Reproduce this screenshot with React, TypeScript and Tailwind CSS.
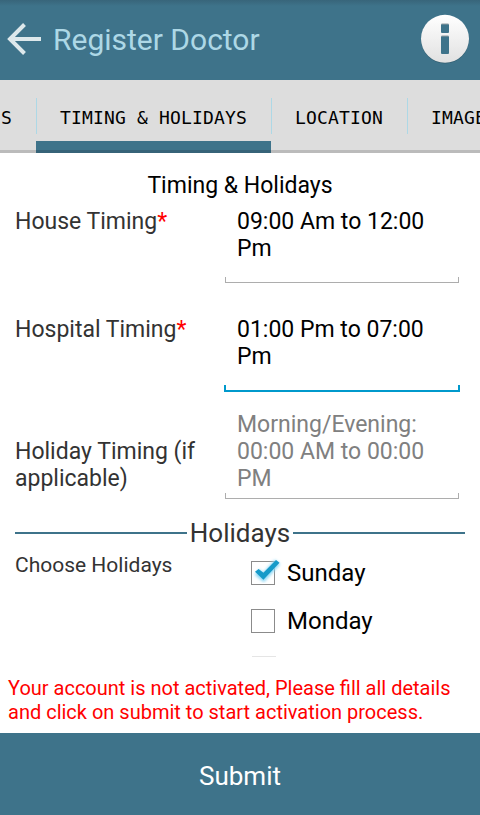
import React from "react";

function Divider() {
  return <div className="mt-[18px] h-9 w-px shrink-0 bg-[#add8e6]" />;
}

function Tab({ label, active = false, className }: { label: string; active?: boolean; className: string }) {
  return (
    <div className={`flex h-[73px] shrink-0 flex-col justify-between ${className}`}>
      <span className="block pt-[26px] text-[18px] leading-[24px] tracking-[0.17px] whitespace-pre">{label}</span>
      {active && <div className="-ml-6 h-3 w-[235px] shrink-0 border-b-[3px] border-[#366378] bg-[#3e738a]" />}
    </div>
  );
}

function Underline({ focused = false }: { focused?: boolean }) {
  return focused ? (
    <div className="-ml-px h-[7px] w-[236px] border-2 border-t-0 border-[#0099cc]" />
  ) : (
    <div className="h-1.5 w-[234px] border border-t-0 border-[#adadad]" />
  );
}

function CheckRow({ label, checked = false }: { label: string; checked?: boolean }) {
  return (
    <div className="flex h-12 items-center">
      <svg width="32" height="32" viewBox="0 0 32 32" className="shrink-0 overflow-visible">
        <defs>
          <filter id="glow" x="-30%" y="-30%" width="160%" height="160%">
            <feGaussianBlur stdDeviation="1.7" />
          </filter>
        </defs>
        <rect x="2.5" y="4.5" width="23" height="23" fill="white" stroke="#8b8b8b" />
        {checked && (
          <>
            <path d="M8 15L14.5 20.5L28.5 5" fill="none" stroke="#8bd7f5" strokeWidth="7" filter="url(#glow)" />
            <path d="M6 14.8L9.6 12L14.4 15.8L27 3L30.5 5.8L14.4 22.7Z" fill="#159ac9" />
          </>
        )}
      </svg>
      <span className="ml-[6px] text-[24px] leading-[28px]">{label}</span>
    </div>
  );
}

export default function App() {
  return (
    <div className="flex h-[815px] w-[480px] flex-col overflow-hidden bg-white font-[Roboto,sans-serif] text-black">
      <header className="flex h-20 shrink-0 items-start bg-[#3e738a] bg-[linear-gradient(#38657a_0,#3e738a_6px)]">
        <svg width="44" height="80" viewBox="0 0 44 80" className="shrink-0" fill="none" stroke="#dde8eb" strokeWidth="4">
          <path d="M9 39H41M24.5 24.5L10 39L24.5 53.5" />
        </svg>
        <h1 className="ml-[9px] pt-[22px] text-[30px] leading-[36px] whitespace-nowrap text-[#add8e6]">Register Doctor</h1>
        <svg width="50" height="50" viewBox="0 0 50 50" className="mt-[14px] mr-[10px] ml-auto shrink-0">
          <defs>
            <linearGradient id="info" x1="0" y1="0" x2="0" y2="1">
              <stop offset="0" stopColor="#ffffff" />
              <stop offset="1" stopColor="#e1e1e1" />
            </linearGradient>
          </defs>
          <circle cx="25" cy="25.5" r="24" fill="#315d70" />
          <circle cx="25" cy="24.8" r="24" fill="url(#info)" />
          <rect x="21" y="10" width="8" height="9" rx="1" fill="#3e738a" />
          <rect x="21" y="22" width="8" height="18" rx="1" fill="#3e738a" />
          <path d="M21.5 10H28.5M21.5 22H28.5" stroke="#929da1" />
        </svg>
      </header>

      <nav className="flex h-[73px] shrink-0 overflow-hidden bg-[linear-gradient(#dddddd_70px,#bbbbbb_70px)] font-['DejaVu_Sans_Mono',monospace]">
        <Tab label="S" className="w-9 pl-[1px]" />
        <Divider />
        <Tab label="TIMING & HOLIDAYS" active className="-ml-px w-[235px] pl-6" />
        <Divider />
        <Tab label="LOCATION" className="w-[135px] pl-[23px]" />
        <Divider />
        <Tab label="IMAGES" className="w-[120px] pl-[23px]" />
      </nav>

      <main className="h-[504px] shrink-0 overflow-hidden px-[15px] pt-[19px] text-[23px] leading-[27px]">
        <h2 className="h-9 text-center">Timing &amp; Holidays</h2>
        <div className="flex h-[108px]">
          <div className="w-[210px] text-[#333333]">House Timing<span className="text-[#ff0000]">*</span></div>
          <div className="w-[234px]">
            <div className="h-[69px] pl-3">09:00 Am to 12:00<br />Pm</div>
            <Underline />
          </div>
        </div>
        <div className="flex h-[95px]">
          <div className="w-[210px] text-[#333333]">Hospital Timing<span className="text-[#ff0000]">*</span></div>
          <div className="w-[234px]">
            <div className="h-[69px] pl-3">01:00 Pm to 07:00<br />Pm</div>
            <Underline focused />
          </div>
        </div>
        <div className="flex h-[105px]">
          <div className="w-[210px] pt-[27px] text-[#333333]">Holiday Timing (if<br />applicable)</div>
          <div className="w-[234px]">
            <div className="h-[82px] pl-3 text-[#808080]">Morning/Evening:<br />00:00 AM to 00:00<br />PM</div>
            <Underline />
          </div>
        </div>
        <div className="flex h-[33px] items-center justify-between">
          <div className="h-0.5 w-[172px] bg-[#3e738a]" />
          <span className="text-[26px] leading-[32px] text-[#333333]">Holidays</span>
          <div className="h-0.5 w-[172px] bg-[#3e738a]" />
        </div>
        <div className="flex">
          <div className="w-[234px] pt-[4px] text-[21px] leading-[25px] text-[#333333]">Choose Holidays</div>
          <div>
            <CheckRow label="Sunday" checked />
            <CheckRow label="Monday" />
            <div className="mt-[11px] ml-[3px] h-px w-6 bg-[#e5e5e5]" />
          </div>
        </div>
      </main>

      <p className="h-[76px] shrink-0 pt-[19px] pl-2 text-[20px] leading-[24px] whitespace-nowrap text-[#ff0000]">
        Your account is not activated, Please fill all details<br />and click on submit to start activation process.
      </p>
      <button className="h-[82px] w-full shrink-0 bg-[#3e738a] pt-1 text-[26px] leading-[32px] text-white">Submit</button>
    </div>
  );
}
